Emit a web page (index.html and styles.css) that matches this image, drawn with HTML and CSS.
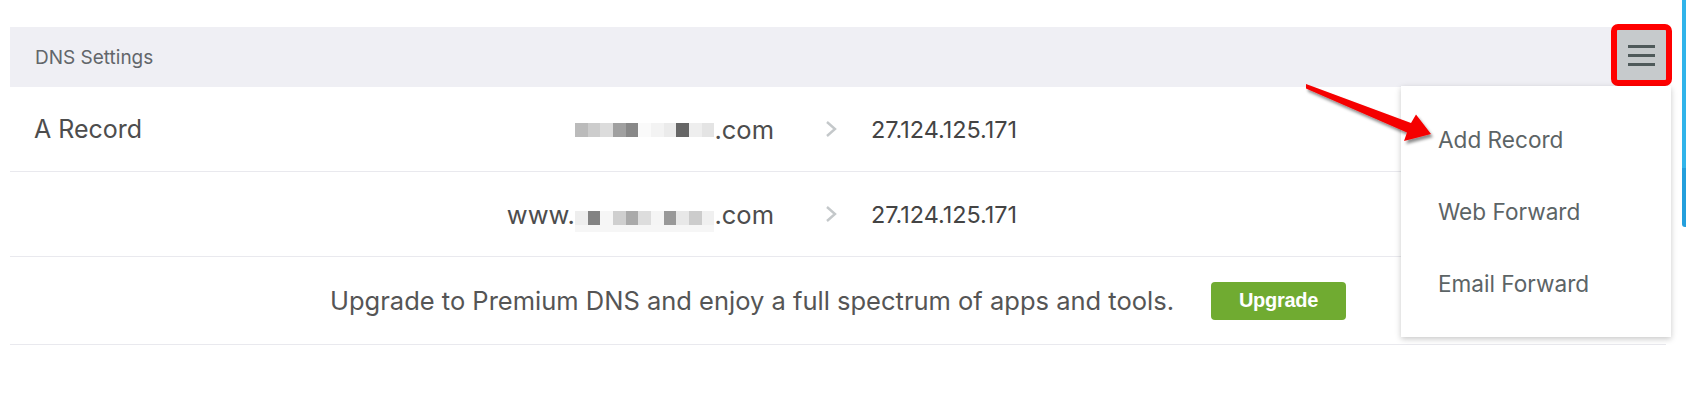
FILE: index.html
```html
<!DOCTYPE html>
<html lang="en">

<head>
  <meta charset="UTF-8">
  <meta name="viewport" content="width=device-width, initial-scale=1.0">
  <title>DNS Settings</title>
  <link rel="stylesheet" href="styles.css">
</head>

<body>
  <section class="dns-panel">
    <div class="panel-head">
      <span class="panel-title">DNS Settings</span>
      <button class="menu-btn" aria-label="Menu">
        <span></span><span></span><span></span>
      </button>
    </div>

    <div class="record-row">
      <div class="rec-type">A Record</div>
      <div class="rec-host">
        <span class="blur">
          <i class="g1"></i><i class="g2"></i><i class="g3"></i><i class="g4"></i><i class="g5"></i><i class="g6"></i><i class="g7"></i><i class="g8"></i><i class="g9"></i><i class="g10"></i><i class="g11"></i>
        </span>.com
      </div>
      <div class="rec-arrow">
        <svg width="12" height="18" viewBox="0 0 12 18"><polyline points="2,2 10,9 2,16" fill="none" stroke="#c4c8ca" stroke-width="2.4"/></svg>
      </div>
      <div class="rec-value">27.124.125.171</div>
    </div>

    <div class="record-row">
      <div class="rec-type"></div>
      <div class="rec-host">
        www.<span class="blur blur-two">
          <i class="h1"></i><i class="h2"></i><i class="h3"></i><i class="h4"></i><i class="h5"></i><i class="h6"></i><i class="h7"></i><i class="h8"></i><i class="h9"></i><i class="h10"></i><i class="h11"></i>
        </span>.com
      </div>
      <div class="rec-arrow">
        <svg width="12" height="18" viewBox="0 0 12 18"><polyline points="2,2 10,9 2,16" fill="none" stroke="#c4c8ca" stroke-width="2.4"/></svg>
      </div>
      <div class="rec-value">27.124.125.171</div>
    </div>

    <div class="upgrade-row">
      <span class="upgrade-text">Upgrade to Premium DNS and enjoy a full spectrum of apps and tools.</span>
      <button class="upgrade-btn">Upgrade</button>
    </div>

    <ul class="dropdown">
      <li>Add Record</li>
      <li>Web Forward</li>
      <li>Email Forward</li>
    </ul>
  </section>

  <!-- annotation arrow pointing at the menu item -->
  <svg class="callout" width="1686" height="418" viewBox="0 0 1686 418">
    <defs>
      <filter id="shade" x="-10%" y="-30%" width="130%" height="170%">
        <feDropShadow dx="2" dy="3" stdDeviation="1.6" flood-color="#000" flood-opacity="0.45"/>
      </filter>
    </defs>
    <polygon points="1306,84 1411,123 1416,114.5 1431,134 1404,141 1407,132.5 1306,88.5" fill="#f50000" filter="url(#shade)"/>
  </svg>

  <div class="side-tab"></div>
</body>

</html>
```

FILE: styles.css
```css
body {
  margin: 0;
  font-family: Inter, "Open Sans", sans-serif;
  color: #4a4a4a;
  background: #fff;
}

.dns-panel {
  position: relative;
  width: 1656px;
  margin: 27px 0 0 10px;
}

.panel-head {
  display: flex;
  justify-content: space-between;
  align-items: flex-start;
  height: 60px;
  background-color: #efeff4;
}

.panel-title {
  padding: 19px 0 0 25px;
  font-size: 19px;
  color: #62666a;
}

.menu-btn {
  display: flex;
  flex-direction: column;
  justify-content: center;
  align-items: center;
  gap: 6px;
  width: 49px;
  height: 50px;
  margin-top: 3px;
  padding: 0;
  border: none;
  background-color: #c6cacc;
  outline: 6px solid #ff0000;
  border-radius: 1px;
}

.menu-btn span {
  display: block;
  width: 27px;
  height: 3px;
  background-color: #4f5a5a;
}

.record-row {
  display: grid;
  grid-template-columns: 240px 500px 97px 1fr;
  align-items: center;
  height: 84px;
  padding-left: 24px;
  border-bottom: 1px solid #e9e9ee;
}

.rec-type {
  font-size: 25px;
  color: #4d4d4d;
}

.rec-host {
  display: flex;
  justify-content: flex-end;
  align-items: center;
  font-size: 25.5px;
  color: #4d4d4d;
}

.rec-arrow {
  display: flex;
  padding-left: 51px;
}

.rec-value {
  font-size: 23.4px;
  color: #444;
}

.blur {
  display: flex;
  height: 14px;
  margin-top: 2px;
}

.blur i {
  display: block;
  width: 12.7px;
  height: 14px;
}

.blur-two {
  height: 21px;
  margin-top: 14px;
}

.blur-two i {
  height: 14px;
  box-shadow: 0 7px 0 #f6f6f6;
}

.g1 { background: #bbb; }
.g2 { background: #ccc; }
.g3 { background: #dcdcdc; }
.g4 { background: #a0a0a0; }
.g5 { background: #888; }
.g6 { background: #fafafa; }
.g7 { background: #f3f3f3; }
.g8 { background: #ebebeb; }
.g9 { background: #666; }
.g10 { background: #eee; }
.g11 { background: #e4e4e4; }

.h1 { background: #eee; }
.h2 { background: #838383; }
.h3 { background: #f6f6f6; }
.h4 { background: #cfcfcf; }
.h5 { background: #aaa; }
.h6 { background: #ddd; }
.h7 { background: #f5f5f5; }
.h8 { background: #999; }
.h9 { background: #e8e8e8; }
.h10 { background: #ccc; }
.h11 { background: #f0f0f0; }

.upgrade-row {
  display: flex;
  justify-content: center;
  align-items: center;
  gap: 37px;
  height: 87px;
  border-bottom: 1px solid #e9e9ee;
}

.upgrade-text {
  font-size: 25.5px;
  color: #555;
}

.upgrade-btn {
  width: 135px;
  height: 38px;
  border: none;
  border-radius: 4px;
  background-color: #70ab31;
  color: #fff;
  font-family: "Liberation Sans", Arial, sans-serif;
  font-weight: bold;
  font-size: 20px;
  letter-spacing: -0.3px;
}

.dropdown {
  position: absolute;
  top: 59px;
  left: 1391px;
  width: 270px;
  height: 251px;
  box-sizing: border-box;
  margin: 0;
  padding: 17px 0;
  list-style: none;
  background: #fff;
  box-shadow: 0 2px 6px rgba(0, 0, 0, 0.22);
}

.dropdown li {
  display: flex;
  align-items: center;
  height: 72px;
  padding-left: 37px;
  font-size: 22.6px;
  color: #5c6466;
}

.callout {
  position: absolute;
  top: 0;
  left: 0;
  pointer-events: none;
}

.side-tab {
  position: absolute;
  top: 0;
  right: 0;
  width: 4px;
  height: 227px;
  border-bottom-left-radius: 3px;
  background: linear-gradient(#31b4ea 74%, #249fdc 74%);
}
```
